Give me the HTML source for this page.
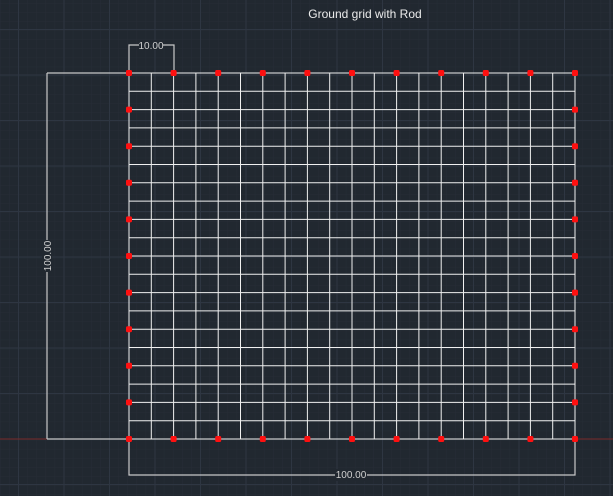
<!DOCTYPE html>
<html><head><style>
html,body{margin:0;padding:0;background:#212830;}
svg{display:block}
text{font-family:"Liberation Sans",sans-serif;}
</style></head><body>
<svg width="613" height="496" xmlns="http://www.w3.org/2000/svg">
<rect width="613" height="496" fill="#212830"/>
<defs>
<pattern id="minor" width="9.1" height="9.1" patternUnits="userSpaceOnUse" x="0" y="3">
<path d="M0 0H9.1M0 0V9.1" stroke="#262d36" stroke-width="1" fill="none"/>
</pattern>
<pattern id="major" width="45.5" height="45.5" patternUnits="userSpaceOnUse" x="18" y="29">
<path d="M0 0.5H45.5M0.5 0V45.5" stroke="#2e3642" stroke-width="1" fill="none"/>
</pattern>
</defs>
<rect width="613" height="496" fill="url(#minor)"/>
<rect width="613" height="496" fill="url(#major)"/>
<line x1="0" y1="439" x2="613" y2="439" stroke="#7a2a2a" stroke-width="1"/>
<text x="365" y="18" fill="#ececec" font-size="12" text-anchor="middle">Ground grid with Rod</text>
<g id="grid" stroke="#f0f0f0" stroke-width="1" fill="none"></g>
<g stroke="#c8c8c8" stroke-width="1.2" fill="none">
<path d="M47 73H129M47 439H129M47 73V439"/>
<path d="M129 439V475H575V439"/>
<path d="M129 73V45H174V73"/>
</g>
<rect x="42" y="240" width="10" height="32" fill="#212830"/>
<text transform="translate(51,256) rotate(-90)" fill="#d0d0d0" font-size="10" text-anchor="middle">100.00</text>
<rect x="335" y="469" width="32" height="12" fill="#212830"/>
<text x="351" y="478" fill="#d0d0d0" font-size="10" text-anchor="middle">100.00</text>
<rect x="139" y="40" width="24" height="10" fill="#212830"/>
<text x="151" y="49" fill="#d0d0d0" font-size="10" text-anchor="middle">10.00</text>
<g id="rods" fill="#ff1010"></g>
<script>
var g=document.getElementById('grid'),r=document.getElementById('rods'),ns='http://www.w3.org/2000/svg';
var x0=129,x1=575,y0=73,y1=439;
for(var i=0;i<=20;i++){
var x=x0+(x1-x0)*i/20,y=y0+(y1-y0)*i/20;
var l=document.createElementNS(ns,'line');l.setAttribute('x1',x);l.setAttribute('x2',x);l.setAttribute('y1',y0);l.setAttribute('y2',y1);g.appendChild(l);
l=document.createElementNS(ns,'line');l.setAttribute('y1',y);l.setAttribute('y2',y);l.setAttribute('x1',x0);l.setAttribute('x2',x1);g.appendChild(l);
}
function dot(x,y){var c=document.createElementNS(ns,'rect');c.setAttribute('x',x-3);c.setAttribute('y',y-3);c.setAttribute('width',6);c.setAttribute('height',6);c.setAttribute('rx',1.5);r.appendChild(c);}
for(var i=0;i<=10;i++){var x=x0+(x1-x0)*i/10,y=y0+(y1-y0)*i/10;dot(x,y0);dot(x,y1);if(i>0&&i<10){dot(x0,y);dot(x1,y);}}
</script>
</svg>
</body></html>
